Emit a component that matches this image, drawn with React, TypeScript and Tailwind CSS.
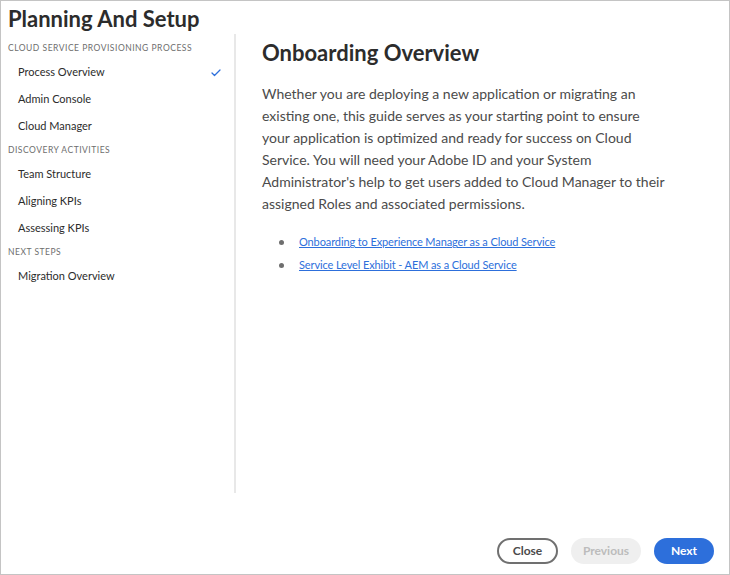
import React from 'react';
import { Check } from 'lucide-react';

const sections = [
  {
    label: 'CLOUD SERVICE PROVISIONING PROCESS',
    items: ['Process Overview', 'Admin Console', 'Cloud Manager']
  },
  {
    label: 'DISCOVERY ACTIVITIES',
    items: ['Team Structure', 'Aligning KPIs', 'Assessing KPIs']
  },
  {
    label: 'NEXT STEPS',
    items: ['Migration Overview']
  }
];

const links = [
  'Onboarding to Experience Manager as a Cloud Service',
  'Service Level Exhibit - AEM as a Cloud Service'
];

const App = () => {
  return (
    <div className="w-[730px] h-[575px] bg-white border border-[#c4c4c4] flex flex-col font-['Lato','Noto_Sans',sans-serif] overflow-hidden">
      {/* Header */}
      <div className="h-[33px] pl-[7px] pt-[3px] flex items-center">
        <h1 className="text-[22px] font-bold text-[#2c2c2c] leading-none">Planning And Setup</h1>
      </div>

      {/* Body */}
      <div className="h-[459px] flex">
        <nav className="w-[235px] border-r-2 border-[#e8e8e8] pt-[4px] shrink-0">
          {sections.map((section, s) => (
            <div key={section.label}>
              <div className="h-[21px] pl-[7px] flex items-center text-[8.5px] tracking-[0.06em] text-[#6e6e6e]">
                {section.label}
              </div>
              {section.items.map((item, i) => (
                <div key={item} className="h-[27px] pl-[17px] pr-[12px] flex items-center justify-between text-[11px] text-[#2c2c2c]">
                  <span>{item}</span>
                  {s === 0 && i === 0 && (
                    <Check className="w-[12px] h-[12px] text-[#2d6fdb]" strokeWidth={2.5} />
                  )}
                </div>
              ))}
            </div>
          ))}
        </nav>

        <main className="pl-[26px] pt-[5px]">
          <h2 className="text-[22px] font-bold text-[#2c2c2c] leading-[28px]">Onboarding Overview</h2>
          <p className="mt-[16px] w-[440px] text-[14px] leading-[22px] text-[#4b4b4b]">
            Whether you are deploying a new application or migrating an
            <br />
            existing one, this guide serves as your starting point to ensure
            <br />
            your application is optimized and ready for success on Cloud
            <br />
            Service. You will need your Adobe ID and your System
            <br />
            Administrator's help to get users added to Cloud Manager to their
            <br />
            assigned Roles and associated permissions.
          </p>
          <ul className="mt-[16px] pl-[17px]">
            {links.map((link) => (
              <li key={link} className="h-[23px] flex items-center gap-[15px]">
                <span className="w-[5px] h-[5px] rounded-full bg-[#6e6e6e]" />
                <a href="#" className="text-[11px] text-[#2d6fdb] underline tracking-[-0.01em]">
                  {link}
                </a>
              </li>
            ))}
          </ul>
        </main>
      </div>

      {/* Footer */}
      <div className="flex-1 flex items-end justify-end gap-[13px] pr-[15px] pb-[10px]">
        <button className="w-[61px] h-[26px] rounded-full border-2 border-[#707070] text-[12px] font-bold text-[#4b4b4b]">
          Close
        </button>
        <button className="w-[70px] h-[26px] rounded-full bg-[#efefef] text-[12px] font-bold text-[#bcbcbc]">
          Previous
        </button>
        <button className="w-[60px] h-[26px] rounded-full bg-[#2d6fdb] text-[12px] font-bold text-white">
          Next
        </button>
      </div>
    </div>
  );
};

export default App;
